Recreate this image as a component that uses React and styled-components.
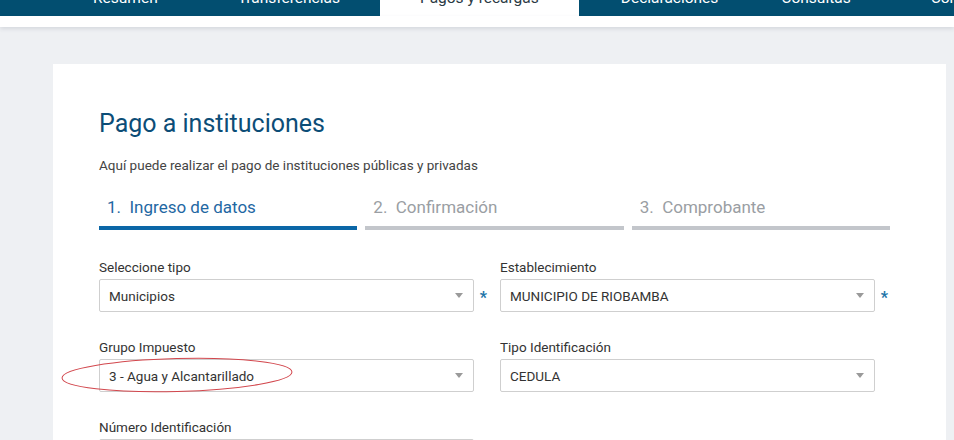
import React from 'react';
import styled, {createGlobalStyle} from 'styled-components';

const GlobalStyle = createGlobalStyle`
  html, body {
    margin: 0;
    padding: 0;
    overflow: hidden;
    background: #eef0f3;
    font-family: Roboto, 'Liberation Sans', Arial, sans-serif;
  }
`;

// Header
const NavBar = styled.nav`
  height: 16px;
  background: #024e70;
  display: flex;
  padding-left: 53px;
  overflow: hidden;
`;

const NavItem = styled.div`
  padding: ${props => props.pad || '0 40px'};
  height: 16px;
  font-size: 15.5px;
  line-height: 20px;
  white-space: nowrap;
  color: ${props => (props.active ? '#2b3a44' : '#ffffff')};
  background: ${props => (props.active ? '#ffffff' : 'transparent')};
  & > span {
    display: block;
    margin-top: -12px;
  }
`;

const SubBar = styled.div`
  height: 11px;
  background: #ffffff;
  box-shadow: 0 2px 4px rgba(40, 50, 70, 0.12);
  position: relative;
`;

const Main = styled.main`
  padding: 37px 8px 0 53px;
`;

const Card = styled.section`
  background: #ffffff;
  width: 893px;
  box-sizing: border-box;
  padding: 45px 56px 40px 46px;
  min-height: 400px;
`;

const Title = styled.h1`
  margin: 0;
  font-size: 25px;
  line-height: 30px;
  font-weight: 400;
  color: #0c4d77;
`;

const Subtitle = styled.p`
  margin: 18px 0 0;
  font-size: 13.5px;
  line-height: 16px;
  color: #444;
`;

// Steps
const Steps = styled.div`
  display: grid;
  grid-template-columns: repeat(3, 1fr);
  column-gap: 8px;
  margin-top: 24px;
`;

const Step = styled.div`
  font-size: 17px;
  line-height: 20px;
  color: ${props => (props.active ? '#1f68a3' : '#9a9ea3')};
  padding: 0 0 9px 8px;
  border-bottom: 4px solid ${props => (props.active ? '#0b67a7' : '#c3c6cb')};
  white-space: pre;
`;

// Form
const Form = styled.div`
  display: grid;
  grid-template-columns: 401px 401px;
  row-gap: 27px;
  margin-top: 29px;
`;

const Field = styled.div`
  position: relative;
`;

const Label = styled.div`
  font-size: 13.5px;
  line-height: 16px;
  color: #333;
  margin-bottom: 4px;
`;

const SelectRow = styled.div`
  display: flex;
  align-items: center;
`;

const Select = styled.div`
  width: 375px;
  height: 33px;
  box-sizing: border-box;
  border: 1px solid #cfcfcf;
  border-radius: 2px;
  display: flex;
  align-items: center;
  justify-content: space-between;
  padding: 0 8px 0 9px;
  font-size: 13.5px;
  color: #333;
`;

const Arrow = styled.span`
  width: 0;
  height: 0;
  border-left: 4px solid transparent;
  border-right: 4px solid transparent;
  border-top: 5px solid #9a9a9a;
  margin-right: 2px;
`;

const Star = styled.span`
  width: 19px;
  text-align: center;
  color: #1d74a8;
  font-size: 16px;
  font-weight: 700;
  padding-top: 3px;
`;

const Mark = styled.svg`
  position: absolute;
  left: -38px;
  top: 18px;
  overflow: visible;
  pointer-events: none;
`;

const fields = [
  {label: 'Seleccione tipo', value: 'Municipios', required: true},
  {label: 'Establecimiento', value: 'MUNICIPIO DE RIOBAMBA', required: true},
  {label: 'Grupo Impuesto', value: '3 - Agua y Alcantarillado', marked: true},
  {label: 'Tipo Identificación', value: 'CEDULA'},
  {label: 'Número Identificación', value: ''}
];

const tabs = [
  {name: 'Resumen'},
  {name: 'Transferencias'},
  {name: 'Pagos y recargas', active: true},
  {name: 'Declaraciones', pad: '0 23px 0 42px'},
  {name: 'Consultas'},
  {name: 'Configuración'}
];

const App = () => (
  <>
    <GlobalStyle />
    <NavBar>
      {tabs.map(tab => (
        <NavItem key={tab.name} active={tab.active} pad={tab.pad}>
          <span>{tab.name}</span>
        </NavItem>
      ))}
    </NavBar>
    <SubBar />
    <Main>
      <Card>
        <Title>Pago a instituciones</Title>
        <Subtitle>Aquí puede realizar el pago de instituciones públicas y privadas</Subtitle>
        <Steps>
          <Step active>{'1.  Ingreso de datos'}</Step>
          <Step>{'2.  Confirmación'}</Step>
          <Step>{'3.  Comprobante'}</Step>
        </Steps>
        <Form>
          {fields.map(field => (
            <Field key={field.label}>
              <Label>{field.label}</Label>
              <SelectRow>
                <Select>
                  <span>{field.value}</span>
                  {field.value && <Arrow />}
                </Select>
                {field.required && <Star>*</Star>}
              </SelectRow>
              {field.marked && (
                <Mark width="232" height="36" viewBox="0 0 232 36">
                  <ellipse
                    cx="116"
                    cy="18"
                    rx="115"
                    ry="16.5"
                    fill="none"
                    stroke="#d2474d"
                    strokeWidth="1"
                    transform="rotate(-1.5 116 18)"
                  />
                </Mark>
              )}
            </Field>
          ))}
        </Form>
      </Card>
    </Main>
  </>
);

export default App;
